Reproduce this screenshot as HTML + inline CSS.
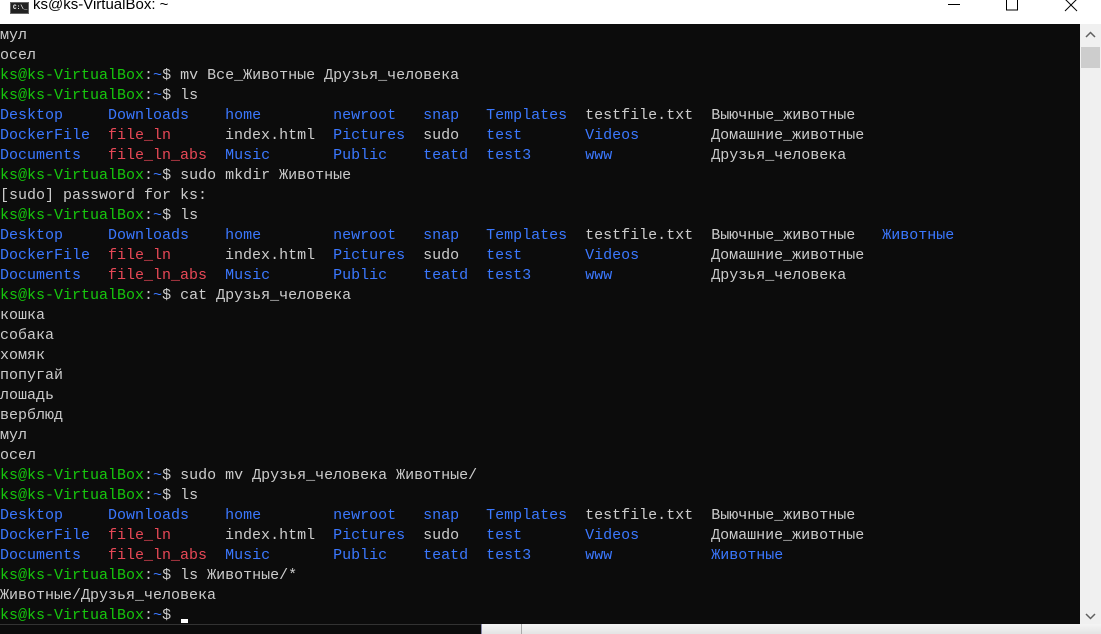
<!DOCTYPE html>
<html><head><meta charset="utf-8"><style>
*{margin:0;padding:0}
html,body{width:1101px;height:634px;overflow:hidden;background:#fff;position:relative}
#title{position:absolute;left:0;top:0;width:1101px;height:24px;background:#fff}
#title .t{position:absolute;left:33px;top:-4px;font:15px "Liberation Sans",sans-serif;color:#000}
#icon{position:absolute;left:10px;top:2px;width:17px;height:10px;background:#222;border:1px solid #666}
#icon span{position:absolute;left:2px;top:1px;font:bold 6px "Liberation Mono",monospace;color:#fff}
#term{position:absolute;left:0;top:24px;width:1080px;height:600px;background:#0c0c0c;overflow:hidden}
pre{font:15px/20px "Liberation Mono","DejaVu Sans Mono",monospace;color:#cccccc;white-space:pre;padding-top:2px}
.g{color:#16c60c}.b{color:#3b78ff}.r{color:#e74856}
#sb{position:absolute;left:1080px;top:24px;width:21px;height:600px;background:#f0f0f0}
#thumb{position:absolute;left:1px;top:23px;width:19px;height:21px;background:#cdcdcd}
#bottom{position:absolute;left:0;top:624px;width:1101px;height:10px;background:#0c0c0c;border-top:1px solid #333}
#bl{position:absolute;left:481px;top:624px;width:620px;height:10px;background:linear-gradient(#f4f4f4,#e4e4e4);border-left:1px solid #88a}
#bl2{position:absolute;left:521px;top:624px;width:1px;height:10px;background:#aaa}
#cur{position:absolute;left:181px;top:619px;width:7px;height:4px;background:#fff}
</style></head><body>
<div id="title"><div id="icon"><span>C:\_</span></div><div class="t">ks@ks-VirtualBox: ~</div>
<svg style="position:absolute;left:940px;top:0" width="160" height="14">
<line x1="8" y1="4.5" x2="20" y2="4.5" stroke="#000"/>
<rect x="66.5" y="-1" width="11" height="11" fill="none" stroke="#000"/>
<line x1="125" y1="-1" x2="137" y2="11" stroke="#000"/><line x1="137" y1="-1" x2="125" y2="11" stroke="#000"/>
</svg></div>
<div id="term"><pre>мул
осел
<span class="g">ks@ks-VirtualBox</span>:<span class="b">~</span>$ mv Все_Животные Друзья_человека
<span class="g">ks@ks-VirtualBox</span>:<span class="b">~</span>$ ls
<span class="b">Desktop</span>     <span class="b">Downloads</span>    <span class="b">home</span>        <span class="b">newroot</span>   <span class="b">snap</span>   <span class="b">Templates</span>  testfile.txt  Выючные_животные
<span class="b">DockerFile</span>  <span class="r">file_ln</span>      index.html  <span class="b">Pictures</span>  sudo   <span class="b">test</span>       <span class="b">Videos</span>        Домашние_животные
<span class="b">Documents</span>   <span class="r">file_ln_abs</span>  <span class="b">Music</span>       <span class="b">Public</span>    <span class="b">teatd</span>  <span class="b">test3</span>      <span class="b">www</span>           Друзья_человека
<span class="g">ks@ks-VirtualBox</span>:<span class="b">~</span>$ sudo mkdir Животные
[sudo] password for ks:
<span class="g">ks@ks-VirtualBox</span>:<span class="b">~</span>$ ls
<span class="b">Desktop</span>     <span class="b">Downloads</span>    <span class="b">home</span>        <span class="b">newroot</span>   <span class="b">snap</span>   <span class="b">Templates</span>  testfile.txt  Выючные_животные   <span class="b">Животные</span>
<span class="b">DockerFile</span>  <span class="r">file_ln</span>      index.html  <span class="b">Pictures</span>  sudo   <span class="b">test</span>       <span class="b">Videos</span>        Домашние_животные
<span class="b">Documents</span>   <span class="r">file_ln_abs</span>  <span class="b">Music</span>       <span class="b">Public</span>    <span class="b">teatd</span>  <span class="b">test3</span>      <span class="b">www</span>           Друзья_человека
<span class="g">ks@ks-VirtualBox</span>:<span class="b">~</span>$ cat Друзья_человека
кошка
собака
хомяк
попугай
лошадь
верблюд
мул
осел
<span class="g">ks@ks-VirtualBox</span>:<span class="b">~</span>$ sudo mv Друзья_человека Животные/
<span class="g">ks@ks-VirtualBox</span>:<span class="b">~</span>$ ls
<span class="b">Desktop</span>     <span class="b">Downloads</span>    <span class="b">home</span>        <span class="b">newroot</span>   <span class="b">snap</span>   <span class="b">Templates</span>  testfile.txt  Выючные_животные
<span class="b">DockerFile</span>  <span class="r">file_ln</span>      index.html  <span class="b">Pictures</span>  sudo   <span class="b">test</span>       <span class="b">Videos</span>        Домашние_животные
<span class="b">Documents</span>   <span class="r">file_ln_abs</span>  <span class="b">Music</span>       <span class="b">Public</span>    <span class="b">teatd</span>  <span class="b">test3</span>      <span class="b">www</span>           <span class="b">Животные</span>
<span class="g">ks@ks-VirtualBox</span>:<span class="b">~</span>$ ls Животные/*
Животные/Друзья_человека
<span class="g">ks@ks-VirtualBox</span>:<span class="b">~</span>$ </pre></div>
<div id="cur"></div>
<div id="sb"><svg style="position:absolute;left:0;top:0" width="21" height="600">
<polyline points="6,13 10.5,8.5 15,13" fill="none" stroke="#606060" stroke-width="1.5"/>
<polyline points="6,590 10.5,594.5 15,590" fill="none" stroke="#606060" stroke-width="1.5"/>
</svg><div id="thumb"></div></div>
<div id="bottom"></div><div id="bl"></div><div id="bl2"></div>
</body></html>
